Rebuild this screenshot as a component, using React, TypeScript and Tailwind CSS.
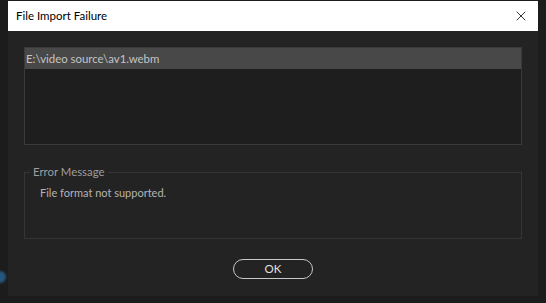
import { X } from "lucide-react";

const App = () => {
    return (
        <div className="relative w-[546px] h-[303px] overflow-hidden bg-[#1c1c1c] pl-[8px] pt-[1px] font-['Lato',sans-serif]">
            {/* blurred app behind the dialog */}
            <div className="absolute left-[-6px] top-[271px] h-[12px] w-[12px] rounded-full bg-[#2a6fa8] opacity-70 blur-[1px]" />

            <div className="flex h-[295px] w-[530px] flex-col bg-[#232323]">
                {/* Title bar */}
                <div className="flex h-[30px] items-center justify-between bg-white pl-[8px] pr-[9px]">
                    <span className="text-[11.5px] text-black">File Import Failure</span>
                    <X className="h-[16px] w-[16px] text-black" strokeWidth={1.2} />
                </div>

                <div className="flex flex-1 flex-col px-[16px] pt-[16px]">
                    {/* File list */}
                    <div className="h-[98px] border border-[#3a3a3a] bg-[#1e1e1e]">
                        <div className="flex h-[21px] items-center bg-[#484848] pl-[1px] text-[11.4px] text-[#c4c4c4]">
                            E:\video source\av1.webm
                        </div>
                    </div>

                    {/* Error message group */}
                    <fieldset className="mt-[20px] h-[74px] border border-[#363636] px-[15px]">
                        <legend className="ml-[-10px] px-[3px] text-[11.4px] leading-[14px] text-[#9e9e9e]">Error Message</legend>
                        <p className="mt-[6px] text-[11px] text-[#b4b4b4]">File format not supported.</p>
                    </fieldset>

                    {/* Button */}
                    <div className="mt-[20px] flex justify-center">
                        <button className="flex h-[20px] w-[80px] items-center justify-center rounded-full border-[1.5px] border-[#c8c8c8] text-[11.5px] text-[#e0e0e0]">
                            OK
                        </button>
                    </div>
                </div>
            </div>
        </div>
    );
};

export default App;
